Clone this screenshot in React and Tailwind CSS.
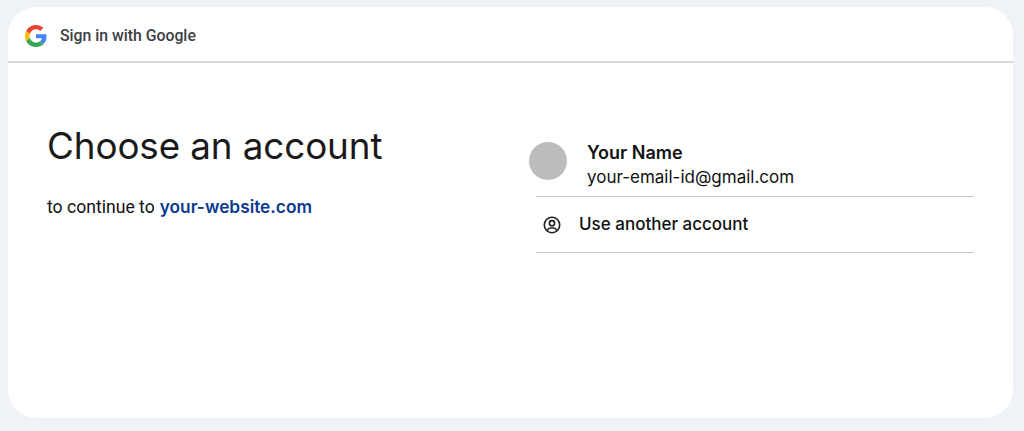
function GoogleLogo() {
  return (
    <svg className="mt-[3px] ml-[-1px]" width="22" height="22" viewBox="0 0 48 48">
      <path fill="#EA4335" d="M24 9.5c3.54 0 6.71 1.22 9.21 3.6l6.85-6.85C35.9 2.38 30.47 0 24 0 14.62 0 6.51 5.38 2.56 13.22l7.98 6.19C12.43 13.72 17.74 9.5 24 9.5z" />
      <path fill="#4285F4" d="M46.98 24.55c0-1.57-.15-3.09-.38-4.55H24v9.02h12.94c-.58 2.96-2.26 5.48-4.78 7.18l7.73 6c4.51-4.18 7.09-10.36 7.09-17.65z" />
      <path fill="#FBBC05" d="M10.53 28.59c-.48-1.45-.76-2.99-.76-4.59s.27-3.14.76-4.59l-7.98-6.19C.92 16.46 0 20.12 0 24c0 3.88.92 7.54 2.56 10.78l7.97-6.19z" />
      <path fill="#34A853" d="M24 48c6.48 0 11.93-2.13 15.89-5.81l-7.73-6c-2.15 1.45-4.92 2.3-8.16 2.3-6.26 0-11.57-4.22-13.47-9.91l-7.98 6.19C6.51 42.62 14.62 48 24 48z" />
    </svg>
  );
}

function AccountIcon() {
  return (
    <svg width="18" height="18" viewBox="0 0 18 18" fill="none" stroke="#1f1f1f" strokeWidth="1.6">
      <circle cx="9" cy="9" r="7.7" />
      <circle cx="9" cy="7.2" r="2.6" />
      <path d="M3.8 14.2c1.3-1.7 3.1-2.5 5.2-2.5s3.9.8 5.2 2.5" />
    </svg>
  );
}

export default function App() {
  return (
    <div className="h-[431px] w-[1024px] overflow-hidden bg-[#eff3f8] pt-[7px] pl-2 pr-[11px] font-['Inter',sans-serif]">
      <div className="h-[411px] rounded-[28px] bg-white">
        <div className="flex h-[56px] items-center gap-[13px] border-b-2 border-[#d9d9d9] pl-[18px]">
          <GoogleLogo />
          <span className="mt-[3px] font-['Roboto',sans-serif] text-[15.8px] font-medium text-[#3c4043]">Sign in with Google</span>
        </div>
        <div className="flex">
          <div className="w-[521px] pl-[39px] pt-[61px]">
            <h1 className="font-['Inter',sans-serif] text-[36.8px] leading-[44px] tracking-[-0.1px] text-[#1a1a1a]">Choose an account</h1>
            <p className="mt-[29px] flex gap-[5px] font-['Roboto',sans-serif] text-[17.6px] leading-5 text-[#111111]">
              to continue to
              <span className="font-['Inter',sans-serif] text-[17.3px] font-semibold text-[#0a3a8e]">your-website.com</span>
            </p>
          </div>
          <div className="w-[445px] pt-[77px]">
            <div className="flex h-[56px] items-start gap-[20px]">
              <div className="mt-[2px] size-[38px] rounded-full bg-[#bcbcbc]"></div>
              <div className="pt-[1px] text-[#111111]">
                <p className="text-[18px] font-semibold leading-6">Your Name</p>
                <p className="text-[17px] leading-[25px]">your-email-id@gmail.com</p>
              </div>
            </div>
            <div className="ml-[7px] flex h-[57px] items-center gap-[18px] border-y border-[#c8c8c8] pl-[7px]">
              <AccountIcon />
              <span className="text-[17px] font-medium text-[#111111]">Use another account</span>
            </div>
          </div>
        </div>
      </div>
    </div>
  );
}
